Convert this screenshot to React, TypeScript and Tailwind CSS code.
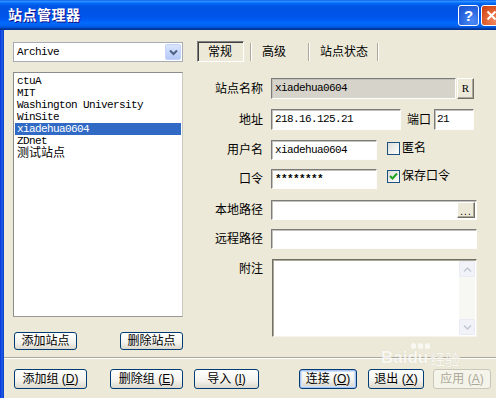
import React from "react";

const SANS = "font-['Liberation_Sans','Noto_Sans_CJK_SC',sans-serif]";
const MONO = "font-['Liberation_Mono','Noto_Sans_CJK_SC',monospace]";

function Chevron({ up = false, color = "#4d6185", w = 2 }: { up?: boolean; color?: string; w?: number }) {
  return (
    <svg width="9" height="7" viewBox="0 0 9 7">
      <path d={up ? "M1 5.5 L4.5 2 L8 5.5" : "M1 1.5 L4.5 5 L8 1.5"} fill="none" stroke={color} strokeWidth={w} />
    </svg>
  );
}

function XPButton({
  children,
  className = "",
  kind = "normal",
}: {
  children: React.ReactNode;
  className?: string;
  kind?: "normal" | "default" | "disabled";
}) {
  const look =
    kind === "disabled"
      ? "border-[#c9c7ba] bg-[#f5f4ea] text-[#aca899]"
      : kind === "default"
      ? "border-[#003c74] bg-[linear-gradient(to_bottom,#ffffff,#f0f0ea_60%,#d6d0c5)] text-black shadow-[inset_0_0_0_1px_#a8c4ee,inset_0_0_0_2px_#cfe0fa]"
      : "border-[#003c74] bg-[linear-gradient(to_bottom,#ffffff,#f3f2ec_60%,#dcd8cd)] text-black";
  return (
    <div
      className={`flex items-center justify-center rounded-[3px] border text-[12px] leading-none whitespace-pre ${SANS} ${look} ${className}`}
    >
      {children}
    </div>
  );
}

function Sunken({ className = "", children }: { className?: string; children?: React.ReactNode }) {
  return (
    <div
      className={`relative flex items-center border border-t-[#7b7b7b] border-l-[#7b7b7b] border-b-[#fdfdfb] border-r-[#fdfdfb] shadow-[inset_1px_1px_0_#c4c2b8] ${className}`}
    >
      {children}
    </div>
  );
}

function Raised({ className = "", children }: { className?: string; children?: React.ReactNode }) {
  return (
    <div
      className={`flex items-center justify-center border border-t-white border-l-white border-b-[#716f64] border-r-[#716f64] bg-[#ece9d8] shadow-[inset_-1px_-1px_0_#aca899] ${className}`}
    >
      {children}
    </div>
  );
}

function CheckBox({ checked = false }: { checked?: boolean }) {
  return (
    <div className="w-[13px] h-[13px] border border-[#1c5180] bg-[linear-gradient(135deg,#dcdcd7,#ffffff)] flex items-center justify-center">
      {checked && (
        <svg width="9" height="9" viewBox="0 0 9 9">
          <path d="M1 4 L3.5 6.5 L8 1.5" fill="none" stroke="#21a121" strokeWidth="2" />
        </svg>
      )}
    </div>
  );
}

function Label({ children, className = "" }: { children: React.ReactNode; className?: string }) {
  return (
    <div className={`w-[66px] mr-[8px] text-right text-[12px] leading-[14px] text-black ${SANS} ${className}`}>
      {children}
    </div>
  );
}

function TitleBar() {
  return (
    <div className="h-[30px] shrink-0 flex items-center bg-[linear-gradient(to_bottom,#0058ee_0%,#3593ff_4%,#288eff_6%,#127dff_8%,#036ffc_10%,#0262ee_14%,#0057e5_20%,#0054e3_24%,#0055eb_56%,#005bf5_66%,#026afe_76%,#0062ef_86%,#0052d6_92%,#0040ab_94%,#003092_100%)]">
      <div
        className={`pl-[8px] text-[14px] font-bold text-white tracking-[0.5px] [text-shadow:1px_1px_0_#0f1089] ${SANS}`}
      >
        站点管理器
      </div>
      <div className="ml-auto flex items-center gap-[2px] mr-[-6px]">
        <div className="w-[21px] h-[21px] rounded-[3px] border border-white bg-[radial-gradient(circle_at_70%_80%,#4d8cf7,#2663de_60%,#1b4fc8)] flex items-center justify-center text-white text-[15px] font-bold leading-none font-['Liberation_Sans',sans-serif]">
          ?
        </div>
        <div className="w-[21px] h-[21px] rounded-[3px] border border-white bg-[radial-gradient(circle_at_70%_80%,#f08a5d,#e05a2a_60%,#c43c12)] flex items-center justify-center">
          <svg width="11" height="11" viewBox="0 0 11 11">
            <path d="M1.5 1.5 L9.5 9.5 M9.5 1.5 L1.5 9.5" stroke="white" strokeWidth="2" />
          </svg>
        </div>
      </div>
    </div>
  );
}

function LeftCol() {
  const items = ["ctuA", "MIT", "Washington University", "WinSite", "xiadehua0604", "ZDnet"];
  return (
    <div className="pl-[9px] pt-[12px] w-[179px] shrink-0 flex flex-col">
      <div className="w-[170px] h-[20px] border border-[#a5acb5] bg-white flex items-center">
        <div className={`pl-[3px] text-[11px] tracking-[-0.6px] text-black ${MONO}`}>Archive</div>
        <div className="ml-auto mr-[1px] w-[16px] h-[16px] rounded-[2px] border border-[#c3d3fd] bg-[linear-gradient(to_bottom,#dbe6fd,#b4c9f6)] flex items-center justify-center">
          <Chevron />
        </div>
      </div>
      <div className="mt-[10px] w-[170px] h-[245px] border border-[#8b8c8c] border-r-[#c9c9c4] border-b-[#9a9a95] bg-white pt-[2px] px-[1px]">
        {items.map((t) => (
          <div
            key={t}
            className={`h-[12px] pl-[2px] flex items-center text-[11px] tracking-[-0.6px] leading-none ${MONO} ${
              t === "xiadehua0604" ? "bg-[#316ac5] text-white" : "text-black"
            }`}
          >
            {t}
          </div>
        ))}
        <div className={`h-[12px] pl-[2px] flex items-center text-[12px] leading-none text-black ${SANS}`}>测试站点</div>
      </div>
      <div className="mt-[15px] flex">
        <XPButton className="ml-[1px] w-[63px] h-[18px]">添加站点</XPButton>
        <XPButton className="ml-[43px] w-[63px] h-[18px]">删除站点</XPButton>
      </div>
    </div>
  );
}

function Tabs() {
  return (
    <div className={`flex h-[21px] text-[12px] text-black ${SANS}`}>
      <div className="w-[47px] h-[21px] border border-t-[#808080] border-l-[#808080] border-r-white border-b-white shadow-[inset_1px_1px_0_#404040] bg-[#ece9d8] pl-[10px] flex items-center">
        常规
      </div>
      <div className="ml-[6px] mt-[2px] h-[18px] w-[2px] border-l border-[#aca899] border-r border-r-white" />
      <div className="w-[56px] pl-[10px] flex items-center">高级</div>
      <div className="mt-[2px] h-[18px] w-[2px] border-l border-[#aca899] border-r border-r-white" />
      <div className="w-[67px] pl-[10px] flex items-center">站点状态</div>
      <div className="mt-[2px] h-[18px] w-[2px] border-l border-[#aca899] border-r border-r-white" />
    </div>
  );
}

function RightCol() {
  return (
    <div className="ml-[14px] pt-[11px] flex flex-col">
      <Tabs />
      <div className="mt-[16px] flex flex-col">
        <div className="flex items-center h-[21px]">
          <Label>站点名称</Label>
          <Sunken className="w-[185px] h-[21px] bg-[#d6d3ca]">
            <span className={`pl-[3px] text-[11px] tracking-[-0.6px] text-black ${MONO}`}>xiadehua0604</span>
          </Sunken>
          <Raised className="ml-[1px] w-[17px] h-[21px]">
            <span className="text-[11px] font-['Liberation_Serif',serif] text-black">R</span>
          </Raised>
        </div>
        <div className="mt-[10px] flex items-center h-[21px]">
          <Label>地址</Label>
          <Sunken className="w-[130px] h-[21px] bg-white">
            <span className={`pl-[3px] text-[11px] tracking-[-0.6px] text-black ${MONO}`}>218.16.125.21</span>
          </Sunken>
          <div className={`ml-[6px] text-[12px] text-black ${SANS}`}>端口</div>
          <Sunken className="ml-[3px] w-[40px] h-[21px] bg-white">
            <span className={`pl-[2px] text-[11px] tracking-[-0.6px] text-black ${MONO}`}>21</span>
          </Sunken>
        </div>
        <div className="mt-[10px] flex items-center h-[20px]">
          <Label>用户名</Label>
          <Sunken className="w-[106px] h-[20px] bg-white">
            <span className={`pl-[3px] text-[11px] tracking-[-0.6px] text-black ${MONO}`}>xiadehua0604</span>
          </Sunken>
          <div className="ml-[10px] mt-[-4px] flex items-center">
            <CheckBox />
            <span className={`ml-[2px] text-[12px] text-black ${SANS}`}>匿名</span>
          </div>
        </div>
        <div className="mt-[9px] flex items-center h-[20px]">
          <Label>口令</Label>
          <Sunken className="w-[106px] h-[20px] bg-white">
            <span className={`pl-[3px] text-[11px] tracking-[-0.6px] text-black ${MONO} font-bold`}>********</span>
          </Sunken>
          <div className="ml-[10px] mt-[-6px] flex items-center">
            <CheckBox checked />
            <span className={`ml-[2px] text-[12px] text-black ${SANS}`}>保存口令</span>
          </div>
        </div>
        <div className="mt-[11px] flex items-center h-[20px]">
          <Label>本地路径</Label>
          <Sunken className="w-[206px] h-[20px] bg-white">
            <Raised className="ml-auto mr-[1px] w-[18px] h-[16px]">
              <span className="text-[10px] leading-none text-black font-['Liberation_Sans',sans-serif] tracking-[1px] mt-[4px]">...</span>
            </Raised>
          </Sunken>
        </div>
        <div className="mt-[9px] flex items-center h-[20px]">
          <Label>远程路径</Label>
          <Sunken className="w-[206px] h-[20px] bg-white" />
        </div>
        <div className="mt-[10px] flex items-start">
          <Label className="pt-[3px]">附注</Label>
          <div className="ml-[1px] w-[205px] h-[78px] border border-t-[#716f64] border-l-[#716f64] border-b-[#f4f3ee] border-r-[#f4f3ee] shadow-[inset_1px_1px_0_#aca899] bg-white flex justify-end p-[1px]">
            <div className="w-[16px] h-full flex flex-col bg-[#f7f7f3]">
              <div className="h-[16px] rounded-[2px] border border-[#e8ebf3] bg-[#f1f3f9] flex items-center justify-center">
                <Chevron up color="#c3c8d3" w={1.5} />
              </div>
              <div className="flex-1" />
              <div className="h-[16px] rounded-[2px] border border-[#e8ebf3] bg-[#f1f3f9] flex items-center justify-center">
                <Chevron color="#c3c8d3" w={1.5} />
              </div>
            </div>
          </div>
        </div>
      </div>
    </div>
  );
}

export default function App() {
  return (
    <div className="w-[496px] h-[398px] overflow-hidden bg-[#ece9d8] flex flex-col relative">
      <TitleBar />
      <div className="flex-1 flex min-h-0">
        <div className="w-[4px] shrink-0 bg-[linear-gradient(to_right,#0831d9,#1d5fe8,#0b3cc2)]" />
        <div className="flex-1 flex flex-col">
          <div className="flex h-[322px]">
            <LeftCol />
            <RightCol />
          </div>
          <div className="mt-[5px] h-[2px] border-t border-t-[#aca899] border-b border-b-white" />
          <div className="mt-[10px] flex items-center h-[20px]">
            <XPButton className="ml-[10px] w-[73px] h-[20px]">
              添加组 (<u>D</u>)
            </XPButton>
            <XPButton className="ml-[23px] w-[73px] h-[20px]">
              删除组 (<u>E</u>)
            </XPButton>
            <XPButton className="ml-[11px] w-[65px] h-[20px]">
              导入 (<u>I</u>)
            </XPButton>
            <XPButton kind="default" className="ml-[40px] w-[58px] h-[20px]">
              连接 (<u>O</u>)
            </XPButton>
            <XPButton className="ml-[11px] w-[56px] h-[20px]">
              退出 (<u>X</u>)
            </XPButton>
            <XPButton kind="disabled" className="ml-[9px] w-[58px] h-[20px]">
              应用 (<u>A</u>)
            </XPButton>
          </div>
        </div>
      </div>
      <div className="absolute left-[381px] top-[343px] flex flex-col items-start opacity-70 pointer-events-none">
        <div className="ml-[30px] flex gap-[2px]">
          <div className="w-[5px] h-[6px] rounded-full bg-white" />
          <div className="w-[5px] h-[6px] rounded-full bg-white" />
          <div className="w-[5px] h-[6px] rounded-full bg-white" />
        </div>
        <div className="flex items-end leading-none">
          <span className="text-[17px] font-bold text-white font-['Liberation_Sans',sans-serif] [text-shadow:0_0_1px_#c8c4b4]">
            Bai
          </span>
          <span className="text-[17px] font-bold text-white font-['Liberation_Sans',sans-serif] [text-shadow:0_0_1px_#c8c4b4]">
            du
          </span>
          <span className="ml-[2px] text-[15px] text-white font-['Noto_Sans_CJK_SC',sans-serif] [text-shadow:0_0_1px_#c8c4b4]">
            经验
          </span>
        </div>
      </div>
    </div>
  );
}
